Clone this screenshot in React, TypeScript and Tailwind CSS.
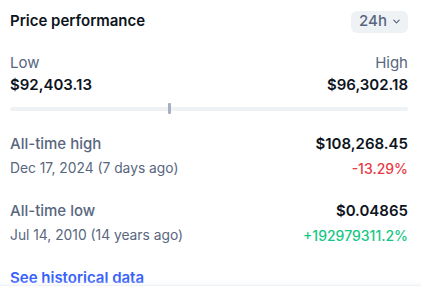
export default function App() {
  return (
    <div
      className="relative h-[286px] w-[421px] overflow-hidden bg-white px-[10px] text-[#0d1421]"
      style={{ fontFamily: "Inter, 'Noto Sans', sans-serif" }}
    >
      <div className="flex h-[42px] items-center justify-between pt-[1px]">
        <h2 className="text-[15px] font-semibold">Price performance</h2>
        <button className="mr-[3px] flex h-[22px] items-center gap-[5px] rounded-md bg-[#eff2f5] pl-[8px] pr-[7px] text-[15px] font-medium text-[#58667e]">
          24h
          <svg width="9" height="9" viewBox="0 0 10 10" fill="none">
            <path d="M2 3.5l3 3 3-3" stroke="#58667e" strokeWidth="1.3" strokeLinecap="round" strokeLinejoin="round" />
          </svg>
        </button>
      </div>

      <div className="mr-[3px] mt-[10px] flex justify-between text-[15px] leading-[22px]">
        <div>
          <div className="text-[#58667e]">Low</div>
          <div className="font-semibold">$92,403.13</div>
        </div>
        <div className="text-right">
          <div className="text-[#58667e]">High</div>
          <div className="font-semibold">$96,302.18</div>
        </div>
      </div>

      <div className="relative mr-[3px] mt-[11px] h-[4px] rounded-full bg-[#eff2f5]">
        <div className="absolute left-[158px] top-[-4px] h-[11px] w-[3px] rounded-[1px] bg-[#a6b0c3]" />
      </div>

      <div className="mr-[3px] mt-[20px] text-[15px] leading-[25px]">
        <div className="flex justify-between">
          <span className="font-medium text-[#58667e]">All-time high</span>
          <span className="font-semibold">$108,268.45</span>
        </div>
        <div className="flex justify-between text-[14px]">
          <span className="text-[13.8px] text-[#58667e]">Dec 17, 2024 (7 days ago)</span>
          <span className="font-medium text-[#ea3943]">-13.29%</span>
        </div>
      </div>

      <div className="mr-[3px] mt-[17px] text-[15px] leading-[25px]">
        <div className="flex justify-between">
          <span className="font-medium text-[#58667e]">All-time low</span>
          <span className="font-semibold">$0.04865</span>
        </div>
        <div className="flex justify-between text-[14px]">
          <span className="text-[13.8px] text-[#58667e]">Jul 14, 2010 (14 years ago)</span>
          <span className="font-medium text-[#16c784]">+192979311.2%</span>
        </div>
      </div>

      <a className="mt-[19px] block text-[15px] font-semibold text-[#3861fb]" href="#">
        See historical data
      </a>

      <div className="pointer-events-none absolute bottom-0 left-0 right-0 h-[6px] bg-gradient-to-b from-transparent to-[#f3f5f8]/60" />
      <div className="absolute bottom-0 left-0 right-0 h-px bg-[#eff2f5]" />
    </div>
  );
}
